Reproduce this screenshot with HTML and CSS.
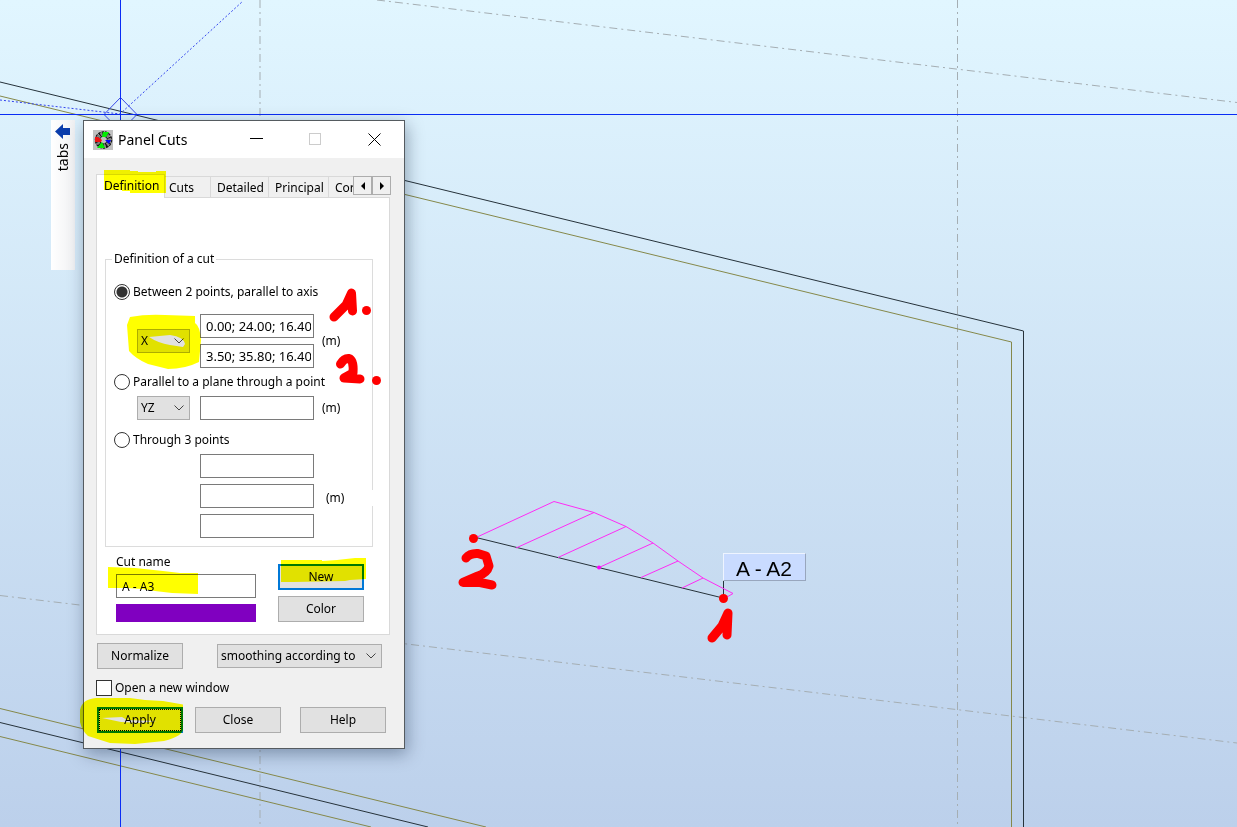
FILE: index.html
```html
<!DOCTYPE html>
<html lang="en">
<head>
<meta charset="utf-8">
<title>Panel Cuts</title>
<link rel="stylesheet" href="styles.css">
</head>
<body>
<main class="viewport">
  <svg class="scene" aria-hidden="true">
    <g class="grid-line">
      <path d="M260 0V2000M957.500 0V2000"/>
      <path d="M377 0L1237 102.500M0 595.500L1237 743"/>
    </g>
    <path class="edge" d="M0 82L1023.500 331V2000"/>
    <path class="edge" d="M0 722.500L428 827"/>
    <path class="rebar" d="M0 96L1011.500 342V2000"/>
    <path class="rebar" d="M0 708.500L486 827M0 736.500L371 827"/>
    <path class="dotted" d="M0 100L120 114L243 1"/>
    <path class="diamond" d="M120.500 97.500L137 114.500L120.500 131L104 114.500Z"/>
    <path class="axis" d="M120.500 0V2000M0 114.500H4000"/>
    <path class="edge" d="M476 537.500L723 598M723.500 598V580"/>
    <path class="moment" d="M475 538L554 501.500L594 512.500L626 526.500L653 543L678 561L703 578L733 593.500L727 597M594 512.500L516 548M626 526.500L558 557.500M653 543L599 567.500M678 561L641 577.500M703 578L682 588"/>
    <circle class="moment-dot" cx="599" cy="567.500" r="2"/>
    <g class="pen">
      <path d="M466 558Q470 553 478 553.500L486 556L489 566Q487 573 478 576L463 582.500L480 582.500L492 585"/>
      <path d="M712 638L722 626L728 613L727 635"/>
    </g>
    <circle class="pen-dot" cx="473.500" cy="538.500" r="4.500"/>
    <circle class="pen-dot" cx="723.500" cy="598.500" r="4.500"/>
  </svg>
  <div class="cut-tag">A - A2</div>

  <aside class="side-tabs">
    <svg width="16" height="16" viewBox="0 0 16 16" aria-hidden="true"><path fill="#0a3cab" d="M0 8.500L8 1V5H15V12H8V16Z"/></svg>
    <span>tabs</span>
  </aside>

  <section class="dialog" role="dialog" aria-label="Panel Cuts">
    <header class="titlebar">
      <svg width="20" height="20" viewBox="0 0 20 20" aria-hidden="true">
        <rect width="20" height="20" fill="#c0c0c0"/>
        <circle cx="10.500" cy="10" r="6" fill="none" stroke="#111" stroke-width="5.500" stroke-dasharray="2 .6"/>
        <circle cx="10.500" cy="10" r="6" fill="none" stroke="#808080" stroke-width="3.500" stroke-dasharray="2 1.500"/>
        <path fill="#0e0" d="M10 2H16L13 7H9ZM4 18L9 12L12 18Z"/>
        <path fill="#e11" d="M2 7H5L9 10L8 12H2Z"/>
        <path fill="#00f" d="M12 10H18L16 14Z"/>
      </svg>
      <h1>Panel Cuts</h1>
      <button class="caption-btn" aria-label="Minimize"><svg width="13" height="13"><path d="M0 5.500H13"/></svg></button>
      <button class="caption-btn" aria-label="Maximize" disabled><svg width="13" height="13"><rect x=".5" y=".5" width="11" height="11"/></svg></button>
      <button class="caption-btn" aria-label="Close window"><svg width="13" height="13"><path d="M.5 .5L12.500 12.500M12.500 .5L.5 12.500"/></svg></button>
    </header>

    <div class="content">
      <div class="tabs" role="tablist">
        <button class="tab active" role="tab" aria-selected="true">Definition</button>
        <button class="tab" role="tab">Cuts</button>
        <button class="tab" role="tab">Detailed</button>
        <button class="tab" role="tab">Principal</button>
        <button class="tab" role="tab">Cor</button>
        <button class="scroll" aria-label="Previous tabs"><svg width="6" height="8"><path d="M5 0V8L1 4Z"/></svg></button>
        <button class="scroll" aria-label="Next tabs"><svg width="6" height="8"><path d="M1 0V8L5 4Z"/></svg></button>
      </div>

      <div class="pane">
        <fieldset class="group">
          <legend>Definition of a cut</legend>
          <label class="option"><input type="radio" name="cut" checked>Between 2 points, parallel to axis</label>
          <div class="params axis-params">
            <select aria-label="Axis"><option>X</option></select>
            <div class="stack">
              <input type="text" aria-label="First point" value="0.00; 24.00; 16.40">
              <input type="text" aria-label="Second point" value="3.50; 35.80; 16.40">
            </div>
            <span>(m)</span>
          </div>
          <label class="option"><input type="radio" name="cut">Parallel to a plane through a point</label>
          <div class="params">
            <select aria-label="Plane"><option>YZ</option></select>
            <input type="text" aria-label="Plane point">
            <span>(m)</span>
          </div>
          <label class="option last"><input type="radio" name="cut">Through 3 points</label>
          <div class="params three">
            <div class="stack">
              <input type="text" aria-label="Point 1">
              <input type="text" aria-label="Point 2">
              <input type="text" aria-label="Point 3">
            </div>
            <span>(m)</span>
          </div>
        </fieldset>

        <div class="naming">
          <div class="name-col">
            <label for="cut-name">Cut name</label>
            <input type="text" id="cut-name" value="A - A3">
            <div class="swatch"></div>
          </div>
          <div class="btn-col">
            <button class="btn default">New</button>
            <button class="btn">Color</button>
          </div>
        </div>
      </div>

      <div class="row smoothing">
        <button class="btn">Normalize</button>
        <select aria-label="Smoothing"><option>smoothing according to</option></select>
      </div>
      <label class="check"><input type="checkbox">Open a new window</label>
      <div class="row actions">
        <button class="btn default focused">Apply</button>
        <button class="btn">Close</button>
        <button class="btn">Help</button>
      </div>
    </div>

    <svg class="marker" viewBox="84 121 320 627" aria-hidden="true">
      <path d="M104 170H130V171H138V172H156V171H166V193H130V191H122V190H104Z"/>
      <path fill-rule="evenodd" d="M130 317Q146 314 165 315L195 316V323Q200 326 201 340L199 362Q185 369 168 369L148 364Q136 359 129 351L127 325ZM149 337L170 335Q184 337 185 344L183 347L170 345Q158 343 149 337Z"/>
      <path d="M108 567L135 568L163 571L180 573L198 573V594L172 593L155 591L142 589L127 588H108Z"/>
      <path d="M281 560H322V561L337 560L355 558H366V579L350 580L345 581L294 582H281Z"/>
      <path fill-rule="evenodd" d="M80 710Q82 699 96 698H130L145 700L163 701L183 704.500V728Q184 736 164 741L135 744L110 743L88 736Q82 731 80 722ZM102 718L122 717L127 720L157 721L140 723L121 722Z"/>
    </svg>
    <svg class="notes" viewBox="84 121 320 627" aria-hidden="true">
      <g class="pen">
        <path d="M334 317L346 305L351.500 293L352.500 311"/>
        <path d="M340.500 364Q344 358 349 358.500Q354 360 353 373L344 378L360 379"/>
      </g>
      <circle class="pen-dot" cx="366.500" cy="310.500" r="4.500"/>
      <circle class="pen-dot" cx="376.500" cy="380.500" r="4.500"/>
      <path class="gap" d="M372.500 490V506"/>
    </svg>
  </section>
</main>
</body>
</html>
```
FILE: styles.css
```css
* { box-sizing: border-box; }

body {
  margin: 0;
  font: 12px/16px "Noto Sans", "Open Sans", sans-serif;
  color: #000;
}

.viewport {
  position: relative;
  min-height: 100vh;
  overflow: hidden;
  background: linear-gradient(#e1f6ff, #bcd0eb);
}

.scene {
  position: absolute;
  inset: 0;
  width: 100%;
  height: 100%;
  fill: none;
}

.grid-line { stroke: #a5aeb3; stroke-dasharray: 8 4 2 4; }
.edge { stroke: #26323a; }
.rebar { stroke: #85884a; }
.dotted { stroke: #3344ee; stroke-dasharray: 2 2; }
.diamond { stroke: #3b4be8; }
.axis { stroke: #0a2cf5; }
.moment { stroke: #ff2bf5; }
.moment-dot { fill: #f0f; }
.pen { fill: none; stroke: #f00; stroke-width: 9px; stroke-linecap: round; stroke-linejoin: round; }
.pen-dot { fill: #f00; }
.gap { stroke: #fff; stroke-width: 2px; }

.cut-tag {
  position: absolute;
  left: 723px;
  top: 553px;
  padding: 3px 13px 0 12px;
  border: 1px solid;
  border-color: #eef4ff #98a6bd #98a6bd #eef4ff;
  background: #c9dbff;
  font: 21px/23px "Liberation Sans", Arial, sans-serif;
}

.side-tabs {
  position: absolute;
  left: 51px;
  top: 120px;
  width: 24px;
  height: 150px;
  padding-top: 3px;
  display: flex;
  flex-direction: column;
  align-items: center;
  gap: 4px;
  background: linear-gradient(90deg, #fff, #f0f1f3);
}
.side-tabs span {
  writing-mode: vertical-rl;
  transform: rotate(180deg);
  font-size: 14px;
}

.dialog {
  position: absolute;
  left: 83px;
  top: 120px;
  width: 322px;
  border: 1px solid #555b60;
  background: #f0f0f0;
  box-shadow: 2px 5px 16px rgba(0, 20, 50, .35);
}

.titlebar {
  display: flex;
  align-items: center;
  height: 37px;
  padding-left: 9px;
  background: #fff;
}
.titlebar h1 {
  flex: 1;
  margin: 0 0 0 5px;
  font-size: 14px;
  font-weight: 400;
  line-height: 20px;
}
.caption-btn {
  display: grid;
  place-items: center;
  width: 59px;
  height: 36px;
  padding: 0;
  border: 0;
  background: none;
}
.caption-btn svg { fill: none; stroke: #000; }
.caption-btn:disabled svg { stroke: #ccc; }

.content { padding: 16px 14px 15px 12px; }

button, input, select { font: inherit; color: inherit; }

.tabs {
  display: grid;
  grid-template-columns: 69px 46px 58px 60px 24px 19px 19px;
  align-items: end;
  height: 23px;
}
.tab {
  height: 21px;
  padding: 1px 6px 0;
  overflow: hidden;
  border: 1px solid #d9d9d9;
  border-width: 1px 1px 0 0;
  background: #f0f0f0;
  text-align: left;
}
.tab.active {
  z-index: 1;
  height: 24px;
  margin-bottom: -1px;
  padding: 0 7px 2px;
  border-left-width: 1px;
  background: #fff;
}
.tab:nth-child(2) { padding-left: 4px; }
.tab:nth-child(5) { border-right: 0; }
.scroll {
  display: grid;
  place-items: center;
  align-self: start;
  height: 19px;
  margin-top: 2px;
  padding: 0;
  border: 1px solid #adadad;
  background: #f0f0f0;
}

.pane {
  padding: 53px 16px 12px 8px;
  border: 1px solid #d9d9d9;
  background: #fff;
}

.group {
  margin: 0;
  padding: 16px 0 8px 8px;
  border: 1px solid #dcdcdc;
}
.group legend { margin-left: -2px; padding: 0 2px; }

.option, .check { display: flex; align-items: center; gap: 3px; height: 18px; }
.option input, .check input {
  flex: none;
  width: 16px;
  height: 16px;
  margin: 0;
  appearance: none;
  border: 1px solid #333;
  background: #fff;
}
.option input { border-radius: 50%; }
.option input:checked { background: radial-gradient(circle, #333 5px, #fff 6px); }

.params {
  display: grid;
  grid-template-columns: 53px 114px auto;
  column-gap: 10px;
  align-items: center;
  margin: 5px 0 5px 23px;
}
.params.axis-params { margin-top: 13px; }
.params span { margin-left: -2px; }
.option.last { margin-top: 11px; }
.params.three { grid-template-columns: 114px auto; margin: 5px 0 0 86px; }
.params.three span { margin: 4px 0 0 2px; }
.stack { display: grid; gap: 6px; }

input[type="text"] {
  width: 100%;
  height: 24px;
  padding: 0 2px 0 5px;
  border: 1px solid #7a7a7a;
  background: #fff;
}
.stack input[type="text"] { font-size: 13px; }

select {
  height: 24px;
  padding: 0 20px 0 3px;
  appearance: none;
  border: 1px solid #adadad;
  border-radius: 0;
  background: #e1e1e1 url("data:image/svg+xml,%3Csvg xmlns='http://www.w3.org/2000/svg' width='10' height='6'%3E%3Cpath d='M.5 .5L5 5L9.500 .5' fill='none' stroke='%23444'/%3E%3C/svg%3E") no-repeat right 5px center;
}

.naming {
  display: grid;
  grid-template-columns: 140px 86px;
  column-gap: 22px;
  margin: 7px 0 0 11px;
}
.name-col { display: flex; flex-direction: column; }
.name-col input { margin: 4px 0 6px; }
.swatch { height: 18px; background: #8000c0; }
.btn-col { display: grid; gap: 6px; align-content: end; }

.btn {
  width: 86px;
  height: 26px;
  padding: 0;
  border: 1px solid #adadad;
  background: #e1e1e1;
}
.btn.default { border: 2px solid #0078d7; }
.btn.focused { outline: 1px dotted #000; outline-offset: -3px; }

.row { display: flex; align-items: center; padding-left: 1px; }
.smoothing { gap: 34px; margin: 8px 0 10px; }
.smoothing select { width: 165px; }
.actions { gap: 12px; margin-top: 10px; }
.actions .btn:last-child { margin-left: 7px; }

.marker, .notes {
  position: absolute;
  inset: 0;
  z-index: 2;
  width: 100%;
  height: 100%;
  overflow: visible;
  pointer-events: none;
}
.marker { fill: #ff0; mix-blend-mode: multiply; }
```
